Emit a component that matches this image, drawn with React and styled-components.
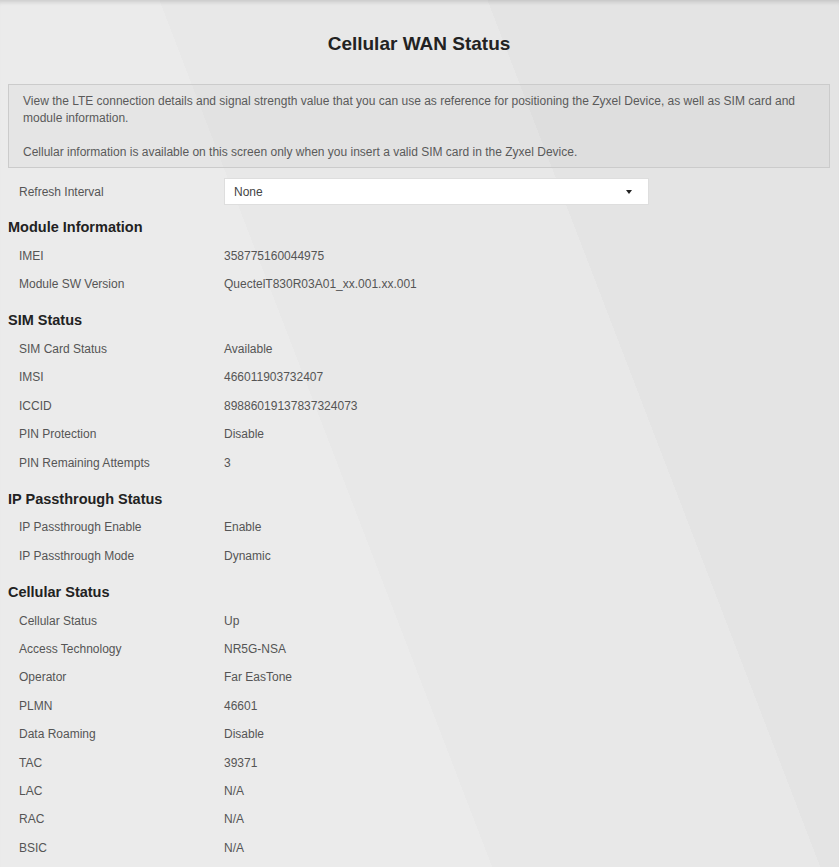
import React from 'react';
import styled, { createGlobalStyle } from 'styled-components';

const GlobalStyle = createGlobalStyle`
    html, body {
        margin: 0;
        padding: 0;
    }

    body {
        font-family: "Liberation Sans", Arial, sans-serif;
        font-size: 12px;
        color: #555;
        background-color: #e7e7e7;
        background-image:
            linear-gradient(69deg,
                #ebebeb 0, #ebebeb 42%,
                #e8e8e8 42%, #e8e8e8 70%,
                #e4e4e4 70%, #e4e4e4 100%);
        background-attachment: fixed;
        min-height: 100vh;
    }
`;

const Page = styled.div`
    min-height: 100vh;
    padding: 32px 9px 20px 8px;
    box-sizing: border-box;
    box-shadow: inset 0 5px 4px -3px rgba(0, 0, 0, 0.14);
`;

const Title = styled.h2`
    margin: 0 0 28px;
    height: 24px;
    line-height: 24px;
    text-align: center;
    font-size: 19px;
    font-weight: 700;
    color: #222;
`;

const InfoBox = styled.div`
    padding: 8px 14px 6px;
    border: 1px solid #cbcbcb;
    background: rgba(0, 0, 0, 0.025);
    line-height: 17px;
    color: #5a5a5a;

    p {
        margin: 0 0 17px;
    }

    p:last-child {
        margin-bottom: 0;
    }
`;

const FieldRow = styled.div`
    display: grid;
    grid-template-columns: 205px 425px;
    align-items: center;
    padding-left: 11px;
    height: ${props => (props.$control ? '27px' : '28.4px')};
    margin: ${props => (props.$control ? '10px 0 1px' : '0')};
`;

const Label = styled.span`
    color: #555;
`;

const Value = styled.span`
    color: #555;
`;

const Select = styled.div`
    display: flex;
    align-items: center;
    justify-content: space-between;
    height: 27px;
    padding: 0 16px 0 9px;
    box-sizing: border-box;
    background: #fff;
    border: 1px solid #dedede;
    color: #444;
`;

const Caret = styled.span`
    width: 0;
    height: 0;
    border-left: 3.5px solid transparent;
    border-right: 3.5px solid transparent;
    border-top: 4px solid #222;
`;

const SectionTitle = styled.h4`
    margin: 12px 0 4.5px;
    height: 20px;
    line-height: 20px;
    font-size: 14.5px;
    font-weight: 700;
    color: #222;
`;

const sections = [
    {
        title: 'Module Information',
        rows: [
            ['IMEI', '358775160044975'],
            ['Module SW Version', 'QuectelT830R03A01_xx.001.xx.001'],
        ],
    },
    {
        title: 'SIM Status',
        rows: [
            ['SIM Card Status', 'Available'],
            ['IMSI', '466011903732407'],
            ['ICCID', '89886019137837324073'],
            ['PIN Protection', 'Disable'],
            ['PIN Remaining Attempts', '3'],
        ],
    },
    {
        title: 'IP Passthrough Status',
        rows: [
            ['IP Passthrough Enable', 'Enable'],
            ['IP Passthrough Mode', 'Dynamic'],
        ],
    },
    {
        title: 'Cellular Status',
        rows: [
            ['Cellular Status', 'Up'],
            ['Access Technology', 'NR5G-NSA'],
            ['Operator', 'Far EasTone'],
            ['PLMN', '46601'],
            ['Data Roaming', 'Disable'],
            ['TAC', '39371'],
            ['LAC', 'N/A'],
            ['RAC', 'N/A'],
            ['BSIC', 'N/A'],
        ],
    },
];

function App() {
    return (
        <>
            <GlobalStyle />
            <Page>
                <Title>Cellular WAN Status</Title>

                <InfoBox>
                    <p>
                        View the LTE connection details and signal strength value that you can use as reference for positioning the Zyxel Device, as well as SIM card and module information.
                    </p>
                    <p>
                        Cellular information is available on this screen only when you insert a valid SIM card in the Zyxel Device.
                    </p>
                </InfoBox>

                <FieldRow $control>
                    <Label>Refresh Interval</Label>
                    <Select>
                        <span>None</span>
                        <Caret />
                    </Select>
                </FieldRow>

                {sections.map(section => (
                    <div key={section.title}>
                        <SectionTitle>{section.title}</SectionTitle>
                        {section.rows.map(([label, value]) => (
                            <FieldRow key={label}>
                                <Label>{label}</Label>
                                <Value>{value}</Value>
                            </FieldRow>
                        ))}
                    </div>
                ))}
            </Page>
        </>
    );
}

export default App;
